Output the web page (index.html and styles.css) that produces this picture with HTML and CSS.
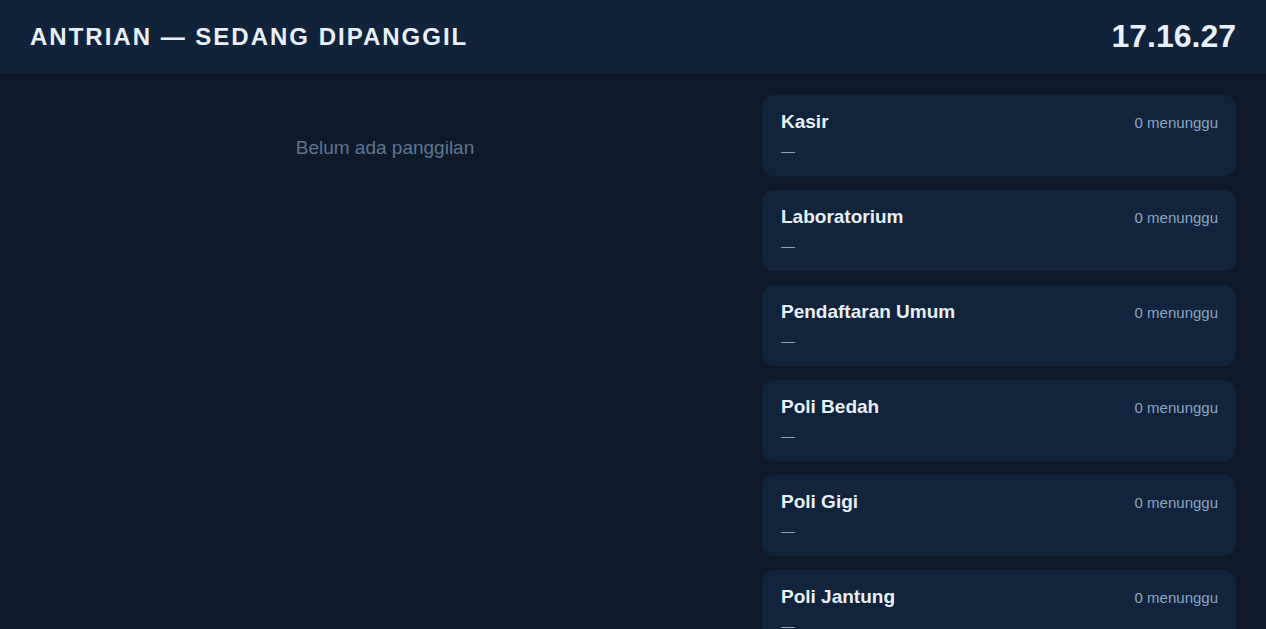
FILE: index.html
```html
<!DOCTYPE html>
<html lang="id">

<head>
    <meta charset="UTF-8">
    <title>Antrian - Sedang Dipanggil</title>
    <link rel="stylesheet" href="styles.css">
</head>

<body>
    <div class="topbar">
        <h1>ANTRIAN — SEDANG DIPANGGIL</h1>
        <div class="clock">17.16.27</div>
    </div>

    <div class="board">
        <div class="current">
            <p class="empty">Belum ada panggilan</p>
        </div>

        <div class="queues">
            <div class="queue-card">
                <div class="queue-head">
                    <span class="queue-name">Kasir</span>
                    <span class="queue-count">0 menunggu</span>
                </div>
                <div class="queue-number">—</div>
            </div>
            <div class="queue-card">
                <div class="queue-head">
                    <span class="queue-name">Laboratorium</span>
                    <span class="queue-count">0 menunggu</span>
                </div>
                <div class="queue-number">—</div>
            </div>
            <div class="queue-card">
                <div class="queue-head">
                    <span class="queue-name">Pendaftaran Umum</span>
                    <span class="queue-count">0 menunggu</span>
                </div>
                <div class="queue-number">—</div>
            </div>
            <div class="queue-card">
                <div class="queue-head">
                    <span class="queue-name">Poli Bedah</span>
                    <span class="queue-count">0 menunggu</span>
                </div>
                <div class="queue-number">—</div>
            </div>
            <div class="queue-card">
                <div class="queue-head">
                    <span class="queue-name">Poli Gigi</span>
                    <span class="queue-count">0 menunggu</span>
                </div>
                <div class="queue-number">—</div>
            </div>
            <div class="queue-card">
                <div class="queue-head">
                    <span class="queue-name">Poli Jantung</span>
                    <span class="queue-count">0 menunggu</span>
                </div>
                <div class="queue-number">—</div>
            </div>
        </div>
    </div>
</body>

</html>
```

FILE: styles.css
```css
:root {
    --background: #0e1a2b;
    --header-bg: #10233a;
    --card-bg: #11243b;
    --text-color: #e8f0fa;
    --text-muted: #8ba6c4;
    --text-dim: #5e7691;
}

body {
    margin: 0;
    background-color: var(--background);
    color: var(--text-color);
    font-family: "Liberation Sans", Arial, Helvetica, sans-serif;
}

.topbar {
    display: flex;
    align-items: center;
    justify-content: space-between;
    height: 73px;
    padding: 0 30px;
    background-color: var(--header-bg);
}

.topbar h1 {
    margin: 0;
    font-size: 24px;
    font-weight: 700;
    letter-spacing: 2px;
    color: var(--text-color);
}

.clock {
    font-size: 32px;
    font-weight: 700;
}

.board {
    display: grid;
    grid-template-columns: 1fr 474px;
    gap: 22px;
    padding: 22px 30px;
}

.current {
    text-align: center;
}

.empty {
    margin: 42px 0 0;
    font-size: 19px;
    color: var(--text-dim);
}

.queues {
    display: flex;
    flex-direction: column;
    gap: 14px;
}

.queue-card {
    background-color: var(--card-bg);
    border-radius: 12px;
    padding: 16px 18px 16px 19px;
    height: 49px;
}

.queue-head {
    display: flex;
    align-items: center;
    justify-content: space-between;
}

.queue-name {
    font-size: 19px;
    font-weight: 700;
    line-height: 22px;
}

.queue-count {
    font-size: 15px;
    color: var(--text-muted);
}

.queue-number {
    margin-top: 9px;
    font-size: 14px;
    line-height: 18px;
    color: var(--text-muted);
}
```
